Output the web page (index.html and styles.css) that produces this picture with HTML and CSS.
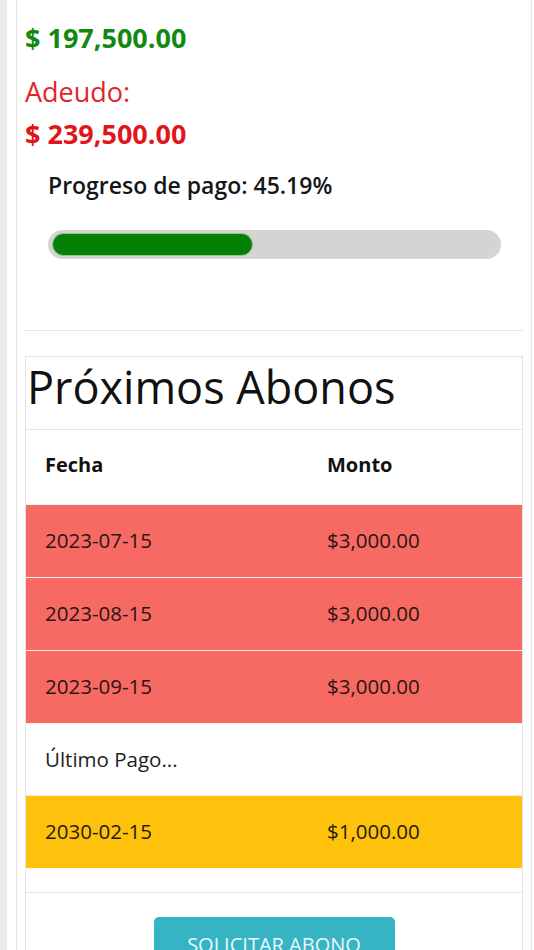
FILE: index.html
```html
<!DOCTYPE html>
<html lang="es">
<head>
<meta charset="utf-8">
<title>Abonos</title>
<link rel="stylesheet" href="styles.css">
</head>
<body>
<div class="page">
  <aside class="rail"></aside>
  <main class="main">
    <section class="card">
      <div class="card-body">
        <div class="amount paid">$ 197,500.00</div>
        <div class="label debt">Adeudo:</div>
        <div class="amount debt">$ 239,500.00</div>
        <div class="progress-block">
          <div class="progress-label">Progreso de pago: 45.19%</div>
          <div class="progress"><div class="progress-fill" style="width:45.19%"></div></div>
        </div>
        <hr class="divider">
        <div class="schedule">
          <div class="schedule-header"><h2>Próximos Abonos</h2></div>
          <table class="schedule-table">
            <thead>
              <tr><th class="col-date">Fecha</th><th>Monto</th></tr>
            </thead>
            <tbody>
              <tr class="overdue"><td>2023-07-15</td><td>$3,000.00</td></tr>
              <tr class="overdue"><td>2023-08-15</td><td>$3,000.00</td></tr>
              <tr class="overdue"><td>2023-09-15</td><td>$3,000.00</td></tr>
              <tr class="note"><td colspan="2">Último Pago...</td></tr>
              <tr class="last"><td>2030-02-15</td><td>$1,000.00</td></tr>
            </tbody>
          </table>
          <div class="schedule-footer">
            <button class="btn-request" type="button">Solicitar Abono</button>
          </div>
        </div>
      </div>
    </section>
  </main>
</div>
</body>
</html>
```
FILE: styles.css
```css
html, body {
  margin: 0;
  padding: 0;
  overflow: hidden;
  background: #ffffff;
}
body {
  font-family: "Open Sans", "Noto Sans", "Liberation Sans", sans-serif;
  color: #1e1e1e;
}
.page {
  display: flex;
  min-height: 100vh;
}
.rail {
  width: 7px;
  flex: 0 0 7px;
  background: #ebebeb;
}
.main {
  flex: 1;
  padding: 0 2px 0 9px;
}
.card {
  border-left: 1px solid #e6e6e6;
  border-right: 1px solid #e6e6e6;
  min-height: 100vh;
}
.card-body {
  padding: 22px 8px 0 8px;
}
.amount {
  font-size: 27px;
  font-weight: 700;
  line-height: 1.2;
}
.amount.paid {
  color: #108a10;
  margin-bottom: 22px;
}
.label.debt {
  font-size: 27px;
  line-height: 1.2;
  color: #e0262a;
  margin-bottom: 9px;
}
.amount.debt {
  color: #e0161c;
}
.progress-block {
  padding: 19px 22px 0 23px;
}
.progress-label {
  font-size: 23px;
  font-weight: 550;
  line-height: 1.4;
  color: #161616;
}
.progress {
  margin-top: 29px;
  height: 29px;
  border-radius: 15px;
  background: #d6d3d3;
  padding: 3px 4px;
  box-sizing: border-box;
}
.progress-fill {
  height: 23px;
  box-sizing: border-box;
  border-radius: 12px;
  background: #067f06;
  border: 1.5px solid #8ccc8c;
}
.divider {
  margin: 71px 0 0 0;
  border: 0;
  border-top: 1px solid #e6e6e6;
}
.schedule {
  margin-top: 25px;
  border: 1px solid #e2e2e2;
}
.schedule-header {
  border-bottom: 1px solid #e4e4e4;
  padding: 3px 0 15px 1px;
}
.schedule-header h2 {
  margin: 0;
  font-size: 45px;
  font-weight: 400;
  line-height: 1.2;
  color: #111;
}
.schedule-table {
  width: 100%;
  border-collapse: collapse;
  margin-bottom: 24px;
}
.schedule-table th,
.schedule-table td {
  text-align: left;
  padding: 20px 19px 21px;
  font-size: 20.5px;
  line-height: 1.5;
}
.schedule-table th {
  font-size: 20px;
  font-weight: 700;
  padding: 20px 19px 24px;
  color: #111;
}
.schedule-table .col-date {
  width: 244px;
}
.schedule-table tbody tr {
  border-top: 1px solid #f4f0f0;
}
.schedule-table tr.overdue {
  background: #f76a63;
  color: #2a1514;
}
.schedule-table tr.note {
  background: #ffffff;
}
.schedule-table tr.last {
  background: #fec20d;
  color: #241c08;
}
.schedule-footer {
  border-top: 1px solid #e6e6e6;
  padding-top: 24px;
  display: flex;
  justify-content: center;
}
.btn-request {
  font-family: inherit;
  font-size: 20px;
  text-transform: uppercase;
  color: #e9f8fa;
  background: #36b4c3;
  border: 0;
  border-radius: 5px;
  padding: 13px 30px;
  line-height: 1.5;
  width: 241px;
}
```
